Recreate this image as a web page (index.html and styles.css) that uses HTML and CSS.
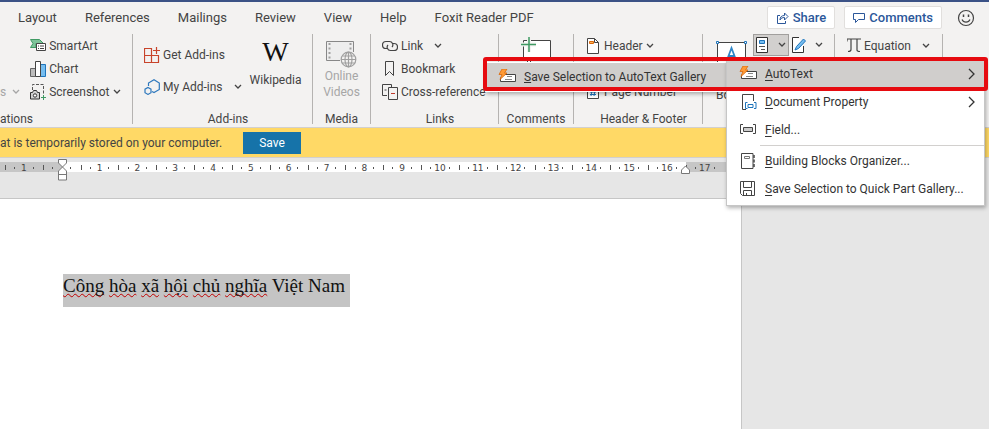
FILE: index.html
```
<!DOCTYPE html>
<html lang="en">
<head>
    <meta charset="UTF-8">
    <meta name="viewport" content="width=device-width, initial-scale=1.0">
    <title>Document - Word</title>
    <link rel="stylesheet" href="styles.css">
</head>
<body>
    <svg class="symbols" aria-hidden="true">
        <symbol id="chevron" viewBox="0 0 8 6"><path d="M1 1l3 3 3-3" fill="none" stroke="currentColor" stroke-width="1.3"/></symbol>
        <symbol id="arrow" viewBox="0 0 8 12"><path d="M1 1l5 5-5 5" fill="none" stroke="currentColor" stroke-width="1.3"/></symbol>
        <symbol id="autotext" viewBox="0 0 18 16">
            <path d="M6 5.500h11.500v7h-15v-4" fill="#fff" stroke="#444"/>
            <path d="M9 7.500h5M7 10.500h7" stroke="#888"/>
            <path d="M4 0h5L6.500 4H9L2 10.500l2-5H1z" fill="#ff9b36" stroke="#d9680c" stroke-width=".8"/>
        </symbol>
    </svg>

    <header class="tabs">
        <nav class="tab-list">
            <a href="#layout">Layout</a>
            <a href="#references">References</a>
            <a href="#mailings">Mailings</a>
            <a href="#review">Review</a>
            <a href="#view">View</a>
            <a href="#help">Help</a>
            <a href="#foxit">Foxit Reader PDF</a>
        </nav>
        <div class="tab-actions">
            <button class="pill" type="button">
                <svg width="13" height="12" viewBox="0 0 13 12" fill="none" stroke="#2b579a"><path d="M4 3.500H1.500v8h8V9M4 8c0-3 1.500-4.500 4.500-4.500V1L12 4.500 8.500 8V5.500C6.500 5.500 5 6 4 8z"/></svg>
                Share
            </button>
            <button class="pill" type="button">
                <svg width="12" height="12" viewBox="0 0 12 12" fill="none" stroke="#2b579a"><path d="M.5 1.500h11v6h-6l-3 3v-3h-2z"/></svg>
                Comments
            </button>
            <button class="smile" type="button" aria-label="Feedback">
                <svg width="18" height="18" viewBox="0 0 18 18" fill="none" stroke="#444" stroke-width="1.2"><circle cx="9" cy="9" r="7.500"/><path d="M5 10.500c1.500 3.500 6.500 3.500 8 0"/><path d="M6.500 5.500v2.500M11.500 5.500v2.500" stroke-width="1.500"/></svg>
            </button>
        </div>
    </header>

    <main>
        <section class="ribbon">
            <div class="group illustrations">
                <div class="group-body">
                    <div class="stack disabled">
                        <button class="tool cut" type="button">s <svg class="chevron"><use href="#chevron"/></svg></button>
                    </div>
                    <div class="stack">
                        <button class="tool" type="button">
                            <svg class="icon" viewBox="0 0 16 16"><path d="M.5 1.500h9l4 4H6v4H.5L3 5.500z" fill="#7fc39a" stroke="#3f9a63"/><path d="M6.500 5.500h9v7h-9z" fill="#fff" stroke="#444"/><path d="M8 8h1m1 0h4M8 10.500h1m1 0h4" stroke="#444"/></svg>
                            SmartArt
                        </button>
                        <button class="tool" type="button">
                            <svg class="icon" viewBox="0 0 16 16"><path d="M.5 7.500h5v8h-5z" fill="#bdbdbd" stroke="#666"/><path d="M10.500 3.500h5v12h-5z" fill="#75bdf0" stroke="#1e74bb"/><path d="M5.500.5h5v15h-5z" fill="#fff" stroke="#444"/></svg>
                            Chart
                        </button>
                        <button class="tool" type="button">
                            <svg class="icon" viewBox="0 0 16 16"><path d="M2.500 6V.5h11v9" fill="none" stroke="#555" stroke-dasharray="3 1.500"/><path d="M.5 8.500h2l1-2h3l1 2h2v6.500h-9z" fill="#d0d0d0" stroke="#333"/><circle cx="5" cy="11.500" r="1.700" fill="#fff" stroke="#333"/><path d="M13.500 11v5M11 13.500h5" stroke="#3f9a63"/></svg>
                            Screenshot <svg class="chevron"><use href="#chevron"/></svg>
                        </button>
                    </div>
                </div>
                <div class="group-name">ations</div>
            </div>

            <div class="group addins">
                <div class="group-body">
                    <div class="stack roomy">
                        <button class="tool" type="button">
                            <svg class="icon" viewBox="0 0 16 16" fill="none" stroke="#c8442b" stroke-width="1.200"><path d="M.5 1.500h7v14h-7zM.5 8.500h14v7h-14M12.500 0v7M9 3.500h7"/></svg>
                            Get Add-ins
                        </button>
                        <button class="tool" type="button">
                            <svg class="icon" viewBox="0 0 16 16" fill="none" stroke="#2e78bd" stroke-width="1.200"><path d="M4.500 7V4L10 .8 15.300 4v6.500L10 13.500l-2-1"/><path d="M4 8.500l3 1.700v3.500L4 15.400l-3-1.700v-3.500z"/></svg>
                            My Add-ins <svg class="chevron far"><use href="#chevron"/></svg>
                        </button>
                    </div>
                    <button class="big" type="button">
                        <span class="wiki">W</span>
                        Wikipedia
                    </button>
                </div>
                <div class="group-name">Add-ins</div>
            </div>

            <div class="group media">
                <div class="group-body">
                    <button class="big disabled" type="button">
                        <svg width="32" height="28" viewBox="0 0 32 28" fill="none" stroke="#a0a0a0"><path d="M15 20.500H1.500v-19h27V12" fill="#eee" stroke="#888"/><path d="M4.500 3v16M25.500 3v8" stroke-width="2" stroke-dasharray="2 2.500"/><g stroke-width="1.200"><circle cx="23.500" cy="19.500" r="7.300" fill="#f3f2f1"/><ellipse cx="23.500" cy="19.500" rx="3.500" ry="7.300"/><path d="M16 19.500h15M17.500 16h12M17.500 23h12M23.500 12v15"/></g></svg>
                        <span>Online<br>Videos</span>
                    </button>
                </div>
                <div class="group-name">Media</div>
            </div>

            <div class="group links">
                <div class="group-body">
                    <div class="stack">
                        <button class="tool" type="button">
                            <svg class="icon" viewBox="0 0 16 16" fill="none" stroke="#444" stroke-width="1.200"><path d="M6 10.500H4a3.300 3.300 0 0 1 0-7h3.500a3.300 3.300 0 0 1 2.500 5.500"/><path d="M10 5.500h2a3.300 3.300 0 0 1 0 7H8.500A3.300 3.300 0 0 1 6 7"/></svg>
                            Link <svg class="chevron far"><use href="#chevron"/></svg>
                        </button>
                        <button class="tool" type="button">
                            <svg class="icon" viewBox="0 0 16 16" fill="none" stroke="#444"><path d="M3.500.5h8v14l-4-4-4 4z"/></svg>
                            Bookmark
                        </button>
                        <button class="tool" type="button">
                            <svg class="icon" viewBox="0 0 16 16" fill="none" stroke="#444"><path d="M5 11.500H.5V.5h9V3M2.500 6h2"/><path d="M6.500 3.500h9v12h-9z"/><path d="M9 9.500h4" stroke="#c0392b"/></svg>
                            Cross-reference
                        </button>
                    </div>
                </div>
                <div class="group-name">Links</div>
            </div>

            <div class="group comments">
                <div class="group-body">
                    <button class="big" type="button" aria-label="Comment">
                        <svg width="30" height="28" viewBox="0 0 30 28" fill="none"><path d="M2.500 3.500h27v18h-17l-6 6v-6h-4z" fill="#fff" stroke="#444"/><path d="M8 0v15M0 7.500h15" stroke="#f3f2f1" stroke-width="4"/><path d="M8 0v15M0 7.500h15" stroke="#3f9a63" stroke-width="1.500"/></svg>
                    </button>
                </div>
                <div class="group-name">Comments</div>
            </div>

            <div class="group header-footer">
                <div class="group-body">
                    <div class="stack spread">
                        <button class="tool" type="button">
                            <svg class="icon" viewBox="0 0 16 16"><path d="M2.500.5h7l4 4v11h-11z" fill="#fff" stroke="#444"/><path d="M9.500.5v4h4" fill="none" stroke="#444"/><path d="M4.500 3.500h4v2h-4z" fill="#ffb45c" stroke="#d9680c"/></svg>
                            Header <svg class="chevron"><use href="#chevron"/></svg>
                        </button>
                        <button class="tool" type="button">
                            <svg class="icon" viewBox="0 0 16 16"><path d="M2.500.5h11v14h-11z" fill="#fff" stroke="#444"/><path d="M7 6l-1 6M10 6l-1 6M5 8h6M5 10.500h6" stroke="#1e74bb"/></svg>
                            Page Number
                        </button>
                    </div>
                </div>
                <div class="group-name">Header &amp; Footer</div>
            </div>

            <div class="group text">
                <div class="group-body">
                    <button class="big text-box" type="button">
                        <svg width="32" height="28" viewBox="0 0 32 28"><path d="M1.500 2.500h28v24h-28z" fill="#fff" stroke="#444"/><path d="M.5 1.500h2v2h-2zM28.500 1.500h2v2h-2z" fill="#fff" stroke="#1e74bb"/><path d="M11 20l4.500-12L20 20M12.500 16h6" fill="none" stroke="#2e86c8" stroke-width="1.800"/></svg>
                        Box
                    </button>
                    <button class="split open" type="button" aria-label="Quick Parts">
                        <svg width="13" height="16" viewBox="0 0 13 16"><path d="M.5.5h11v15H.5z" fill="#fff" stroke="#333"/><path d="M3.500 3.500h5v3h-5z" fill="#75bdf0" stroke="#1e74bb"/><path d="M3 9.500h6M5 12.500h4" stroke="#555"/></svg>
                        <svg class="chevron"><use href="#chevron"/></svg>
                    </button>
                    <button class="split" type="button" aria-label="Signature Line">
                        <svg width="15" height="16" viewBox="0 0 15 16"><path d="M8 .5H1.500v15h11V9" fill="#fff" stroke="#333"/><path d="M4 13l1.500-3.500 7-7.500 2 2-7 7.500z" fill="#75bdf0" stroke="#1e74bb"/></svg>
                        <svg class="chevron"><use href="#chevron"/></svg>
                    </button>
                </div>
            </div>

            <div class="group symbols-group">
                <div class="group-body">
                    <button class="tool" type="button">
                        <svg width="14" height="15" viewBox="0 0 14 15" fill="none" stroke="#444" stroke-width="1.200"><path d="M0 3.500V1h14M4 1v10.500c0 1-1 2-3 2M10 1v11c0 1.500 1.500 1.500 3 1.500"/></svg>
                        Equation <svg class="chevron far"><use href="#chevron"/></svg>
                    </button>
                </div>
            </div>
        </section>

        <div class="message-bar">
            <span>at is temporarily stored on your computer.</span>
            <button class="save" type="button">Save</button>
        </div>

        <div class="workspace">
            <div class="ruler">
                <span class="cm margin">1</span>
                <span class="cm origin"><svg class="indent" width="10" height="22" viewBox="0 0 10 22" fill="#fff" stroke="#777"><path d="M.5.5h8V4l-4 4 4 4v9h-8v-9l4-4-4-4zM.5 15.500h8"/></svg></span>
                <span class="cm">1</span>
                <span class="cm">2</span>
                <span class="cm">3</span>
                <span class="cm">4</span>
                <span class="cm">5</span>
                <span class="cm">6</span>
                <span class="cm">7</span>
                <span class="cm">8</span>
                <span class="cm">9</span>
                <span class="cm">10</span>
                <span class="cm">11</span>
                <span class="cm">12</span>
                <span class="cm">13</span>
                <span class="cm">14</span>
                <span class="cm">15</span>
                <span class="cm">16</span>
                <span class="cm margin">17<svg class="right-indent" width="10" height="9" viewBox="0 0 10 9" fill="#fff" stroke="#777"><path d="M.5 8.500V5l4-4 4 4v3.500z"/></svg></span>
            </div>
            <article class="page">
                <p class="selection" lang="vi"><span class="typo">Công</span> <span class="typo">hòa</span> <span class="typo">xã</span> <span class="typo">hội</span> <span class="typo">chủ</span> <span class="typo">nghĩa</span> Việt Nam</p>
            </article>
        </div>
    </main>

    <div class="submenu">
        <button class="menu-item hover" type="button">
            <svg class="menu-icon" viewBox="0 0 18 16"><use href="#autotext"/></svg>
            <span><u>S</u>ave Selection to AutoText Gallery</span>
        </button>
    </div>
    <div class="menu">
        <button class="menu-item hover" type="button">
            <svg class="menu-icon" viewBox="0 0 18 16"><use href="#autotext"/></svg>
            <span><u>A</u>utoText</span>
            <svg class="arrow"><use href="#arrow"/></svg>
        </button>
        <button class="menu-item" type="button">
            <svg class="menu-icon" viewBox="0 0 18 16"><path d="M7 15.500H3.500V.5h11V7" fill="#fff" stroke="#444"/><path d="M8.500 8.500h-2v6h2M15 8.500h2v6h-2M9 10.500h5v3H9z" fill="none" stroke="#1e74bb"/></svg>
            <span><u>D</u>ocument Property</span>
            <svg class="arrow"><use href="#arrow"/></svg>
        </button>
        <button class="menu-item" type="button">
            <svg class="menu-icon" viewBox="0 0 18 16"><path d="M4 2.500H1.500v9H4M14 2.500h2.500v9H14" fill="none" stroke="#444"/><path d="M4.500 5.500h9v4h-9z" fill="#ccc" stroke="#444"/></svg>
            <span><u>F</u>ield...</span>
        </button>
        <hr>
        <button class="menu-item" type="button">
            <svg class="menu-icon" viewBox="0 0 18 16"><path d="M2.500.5H14v15H2.500z" fill="#fff" stroke="#444"/><path d="M5.500 3.500h5v2h-5z" fill="none" stroke="#777"/><path d="M15 2v3M15 6.500v3M15 11v3" stroke="#444" stroke-width="1.500"/></svg>
            <span><u>B</u>uilding Blocks Organizer...</span>
        </button>
        <button class="menu-item" type="button">
            <svg class="menu-icon" viewBox="0 0 18 16" fill="none" stroke="#444"><path d="M1.500.5h14v14h-12l-2-2zM4.500.5v6h8v-6M4.500 14.500v-5h8v5M7.500 12v2.500"/></svg>
            <span><u>S</u>ave Selection to Quick Part Gallery...</span>
        </button>
    </div>
    <div class="highlight"></div>
</body>
</html>
```
FILE: styles.css
```
*{
    margin: 0;
    padding: 0;
    box-sizing: border-box;
}

body{
    display: flex;
    flex-direction: column;
    min-height: 100vh;
    overflow: hidden;
    background: #f3f2f1;
    color: #444;
    font-family: Roboto, "Open Sans", sans-serif;
    font-size: 12px;
    line-height: 16px;
}

button{
    border: none;
    background: none;
    color: inherit;
    font: inherit;
    white-space: nowrap;
}

svg{
    flex: none;
}

main{
    display: flex;
    flex-direction: column;
    flex: 1;
}

.symbols{
    position: absolute;
    width: 0;
    height: 0;
}

/* tabs */
.tabs{
    display: flex;
    justify-content: space-between;
    align-items: center;
    height: 32px;
    padding: 1px 14px 0 18px;
    border-top: 2px solid #3b5286;
}

.tab-list{
    display: flex;
    gap: 28px;
    font-size: 13px;
}

.tab-list a{
    color: #444;
    text-decoration: none;
    white-space: nowrap;
}

.tab-actions{
    display: flex;
    align-items: center;
    gap: 9px;
}

.pill{
    display: flex;
    align-items: center;
    gap: 4px;
    height: 23px;
    padding: 0 8px;
    border: 1px solid #e1dfdd;
    border-radius: 2px;
    background: #fff;
    color: #2b579a;
    font-size: 13px;
    font-weight: 500;
}

.smile{
    height: 18px;
    margin-left: 6px;
}

/* ribbon */
.ribbon{
    display: flex;
    height: 95px;
    padding: 2px 0 3px;
}

.group{
    display: flex;
    flex: none;
    flex-direction: column;
    justify-content: space-between;
    border-right: 1px solid #b5b3b1;
}

.group-body{
    display: flex;
}

.group-name{
    height: 12px;
    line-height: 14px;
    text-align: center;
}

.stack{
    display: flex;
    flex-direction: column;
    align-items: flex-start;
}

.spread{
    gap: 23px;
}

.tool{
    display: flex;
    align-items: center;
    gap: 3px;
    height: 23px;
}

.icon{
    width: 16px;
    height: 16px;
}

.chevron{
    width: 8px;
    height: 6px;
}

.far{
    margin-left: 8px;
}

.disabled{
    color: #a6a6a6;
}

.big{
    display: flex;
    flex-direction: column;
    align-items: center;
    padding-top: 6px;
}

.illustrations{
    width: 133px;
}

.illustrations .group-body{
    gap: 10px;
}

.illustrations .group-name{
    text-align: left;
}

.illustrations .stack.disabled{
    justify-content: flex-end;
}

.cut{
    gap: 6px;
}

.addins{
    width: 180px;
    padding-left: 11px;
}

.addins .group-body{
    gap: 8px;
}

.roomy{
    gap: 9px;
    padding-top: 9px;
}

.addins .big{
    padding-top: 1px;
}

.wiki{
    height: 37px;
    color: #111;
    font-family: "Liberation Serif", serif;
    font-size: 28px;
    line-height: 34px;
}

.media{
    width: 58px;
}

.media .group-body{
    justify-content: center;
}

.links{
    width: 128px;
    padding-left: 11px;
}

.comments{
    width: 75px;
}

.comments .group-body{
    justify-content: center;
}

.comments .big{
    padding-top: 3px;
}

.header-footer{
    width: 129px;
    padding-left: 11px;
}

.text{
    width: 132px;
    padding-left: 13px;
}

.text-box{
    gap: 19px;
    align-items: flex-start;
    width: 32px;
    margin-right: 5px;
}

.split{
    display: flex;
    justify-content: center;
    align-items: center;
    gap: 9px;
    width: 36px;
    height: 22px;
}

.open{
    border: 1px solid #a19f9d;
    background: #d2d0ce;
}

.symbols-group{
    width: 108px;
    padding-left: 12px;
}

/* message bar */
.message-bar{
    display: flex;
    align-items: center;
    gap: 21px;
    height: 31px;
    border-top: 1px solid #d2d0ce;
    border-bottom: 1px solid #d2d0ce;
    background: #ffd966;
}

.save{
    width: 58px;
    height: 22px;
    background: #1673a9;
    color: #fff;
}

/* document */
.workspace{
    display: flex;
    flex: 1;
    flex-direction: column;
    padding-top: 4px;
    background: #e6e6e6;
}

.ruler{
    display: flex;
    width: 75%;
    height: 10px;
    padding: 0 18px 0 5px;
    background: #c6c6c6;
}

.cm{
    position: relative;
    flex: 1;
    background-color: #fff;
    background-image: linear-gradient(#555, #555), linear-gradient(#555, #555), linear-gradient(#555, #555);
    background-position: 0 3px, 25% 5px, 75% 5px;
    background-repeat: no-repeat;
    background-size: 1px 5px, 1px 2px, 1px 2px;
    font-family: "DejaVu Sans", sans-serif;
    font-size: 9px;
    line-height: 12px;
    text-align: center;
}

.cm.margin{
    background-color: #c6c6c6;
}

.cm.origin{
    background-color: #c6c6c6;
    background-image: linear-gradient(#555, #555), linear-gradient(#555, #555), linear-gradient(#555, #555), linear-gradient(#fff, #fff);
    background-position: 0 3px, 25% 5px, 75% 5px, right top;
    background-size: 1px 5px, 1px 2px, 1px 2px, 50% 100%;
}

.indent{
    position: absolute;
    top: -3px;
    left: 15px;
}

.right-indent{
    position: absolute;
    top: 3px;
    left: -5px;
}

.page{
    flex: 1;
    width: 75%;
    margin-top: 26px;
    padding: 75px 0 0 63px;
    border-top: 1px solid #c6c6c6;
    border-right: 1px solid #c6c6c6;
    background: #fff;
}

.selection{
    width: fit-content;
    height: 33px;
    padding-right: 5px;
    background: #c4c4c4;
    color: #111;
    font-family: "Liberation Serif", serif;
    font-size: 19px;
    line-height: 23px;
}

.typo{
    text-decoration: underline wavy #c00000 1px;
    text-decoration-skip-ink: none;
    text-underline-offset: 1px;
}

/* menus */
.menu,
.submenu{
    position: absolute;
    background: #fff;
    box-shadow: 1px 2px 4px rgba(0, 0, 0, .3);
}

.menu{
    top: 60px;
    left: 726px;
    width: 259px;
    padding-bottom: 2px;
    border: 1px solid #c6c6c6;
    border-top: none;
}

.submenu{
    top: 62px;
    left: 485px;
    width: 242px;
    padding: 1px;
}

.menu-item{
    display: flex;
    align-items: center;
    gap: 8px;
    width: 100%;
    height: 28px;
    padding: 0 8px 0 12px;
    color: #333;
    text-align: left;
}

.menu-item.hover{
    background: #d0cecc;
}

.menu-icon{
    width: 18px;
    height: 16px;
}

.arrow{
    width: 8px;
    height: 12px;
    margin-left: auto;
}

.menu u{
    text-underline-offset: 2px;
}

.menu hr{
    margin: 1px 0 1px 33px;
    border: none;
    border-top: 1px solid #d2d0ce;
}

.highlight{
    position: absolute;
    top: 57px;
    left: 483px;
    width: 505px;
    height: 34px;
    border: 4px solid #e60b10;
    border-radius: 3px;
    pointer-events: none;
}
```
